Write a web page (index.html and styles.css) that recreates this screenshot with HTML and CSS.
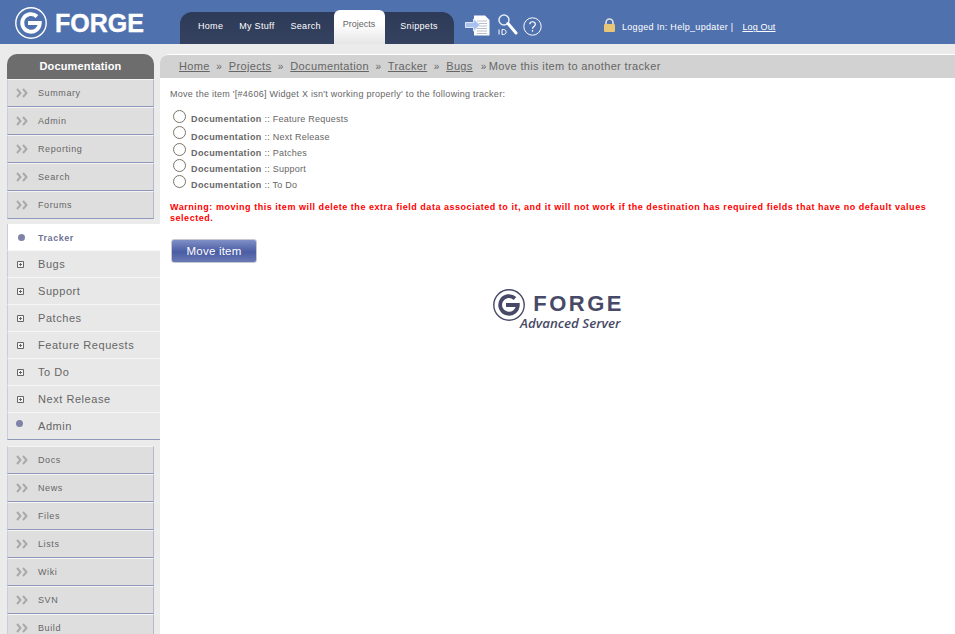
FILE: index.html
```html
<!DOCTYPE html>
<html lang="en">

<head>
    <meta charset="UTF-8">
    <title>Move this item to another tracker</title>
    <link rel="stylesheet" href="styles.css">
</head>

<body>
    <svg class="defs" width="0" height="0">
        <symbol id="chev" viewBox="0 0 12 10">
            <path d="M1 1l3.5 4L1 9M7 1l3.5 4L7 9" fill="none" stroke="#a9a9a9" stroke-width="2" />
        </symbol>
        <symbol id="plus" viewBox="0 0 7 7">
            <path d="M.5.5h6v6h-6z" fill="#f4f4f4" stroke="#666" />
            <path d="M2 3.5h3M3.5 2v3" stroke="#666" />
        </symbol>
        <symbol id="gmark" viewBox="0 0 32 32">
            <circle cx="16" cy="16" r="15.200" fill="none" stroke="currentColor" stroke-width="1.400" />
            <path d="M22 9.500A8.800 8.800 0 1 0 24.800 16H13" fill="none" stroke="currentColor" stroke-width="3.800" />
        </symbol>
    </svg>

    <div class="header">
        <div class="logo">
            <svg class="logo-mark"><use href="#gmark" /></svg>
            <span class="logo-text">FORGE</span>
        </div>
        <ul class="tabs">
            <li><a>Home</a></li>
            <li><a>My Stuff</a></li>
            <li><a>Search</a></li>
            <li class="on"><a>Projects</a></li>
            <li><a>Snippets</a></li>
        </ul>
        <div class="tools">
            <svg width="25" height="21" viewBox="0 0 25 21">
                <path d="M9 .5h11l4.500 4.500v15.500H9z" fill="#fff" />
                <path d="M12 6h10M12 8.500h10M12 11h10M12 13.500h10M12 16h10M12 18.500h10" stroke="#b9bfcc" />
                <path d="M.5 7.500h8V4l6.500 6-6.500 6v-3.500h-8z" fill="#a9c1ee" stroke="#dfe8f8" />
            </svg>
            <svg width="21" height="22" viewBox="0 0 21 22">
                <circle cx="6" cy="6" r="5" fill="none" stroke="#e4ebf7" stroke-width="1.500" />
                <path d="M10 9.500l8 9.500" stroke="#fff" stroke-width="3" stroke-linecap="round" />
                <path d="M1 15.500v5M4 15.500v5h1.500c3.500 0 3.500-5 0-5z" fill="none" stroke="#fff" />
            </svg>
            <svg width="19" height="19" viewBox="0 0 19 19">
                <circle cx="9.500" cy="9.500" r="8.700" fill="none" stroke="#fff" />
                <path d="M6.800 7.300c0-3.400 5.500-3.400 5.500 0 0 2.300-2.800 2.200-2.800 4.500" fill="none" stroke="#fff" stroke-width="1.200" />
                <path d="M9.500 13v1.600" stroke="#fff" stroke-width="1.300" />
            </svg>
        </div>
        <div class="user">
            <svg width="13" height="14" viewBox="0 0 13 14">
                <path d="M3 7V4.500a3.500 3.500 0 0 1 7 0V7" fill="none" stroke="#e3e3e3" stroke-width="1.600" />
                <rect x="1" y="6" width="11" height="8" rx="1" fill="#e9c577" />
            </svg>
            <span>Logged In: Help_updater |</span>
            <a>Log Out</a>
        </div>
    </div>

    <div class="page">
        <div class="side">
            <div class="side-title">Documentation</div>
            <ul class="menu">
                <li><svg class="chev"><use href="#chev" /></svg>Summary</li>
                <li><svg class="chev"><use href="#chev" /></svg>Admin</li>
                <li><svg class="chev"><use href="#chev" /></svg>Reporting</li>
                <li><svg class="chev"><use href="#chev" /></svg>Search</li>
                <li><svg class="chev"><use href="#chev" /></svg>Forums</li>
            </ul>
            <ul class="submenu">
                <li class="current"><i class="dot"></i>Tracker</li>
                <li><svg class="plus"><use href="#plus" /></svg>Bugs</li>
                <li><svg class="plus"><use href="#plus" /></svg>Support</li>
                <li><svg class="plus"><use href="#plus" /></svg>Patches</li>
                <li><svg class="plus"><use href="#plus" /></svg>Feature Requests</li>
                <li><svg class="plus"><use href="#plus" /></svg>To Do</li>
                <li><svg class="plus"><use href="#plus" /></svg>Next Release</li>
                <li><i class="dot"></i>Admin</li>
            </ul>
            <ul class="menu">
                <li><svg class="chev"><use href="#chev" /></svg>Docs</li>
                <li><svg class="chev"><use href="#chev" /></svg>News</li>
                <li><svg class="chev"><use href="#chev" /></svg>Files</li>
                <li><svg class="chev"><use href="#chev" /></svg>Lists</li>
                <li><svg class="chev"><use href="#chev" /></svg>Wiki</li>
                <li><svg class="chev"><use href="#chev" /></svg>SVN</li>
                <li><svg class="chev"><use href="#chev" /></svg>Build</li>
            </ul>
        </div>

        <div class="main">
            <div class="crumbs">
                <a>Home</a><b>»</b><a>Projects</a><b>»</b><a>Documentation</a><b>»</b><a>Tracker</a><b>»</b><a>Bugs</a><b class="last">»</b>Move this item to another tracker
            </div>
            <div class="content">
                <p class="intro">Move the item '[#4606] Widget X isn't working properly' to the following tracker:</p>
                <ul class="choices">
                    <li><input type="radio" name="tracker"><span><strong>Documentation</strong> :: Feature Requests</span></li>
                    <li><input type="radio" name="tracker"><span><strong>Documentation</strong> :: Next Release</span></li>
                    <li><input type="radio" name="tracker"><span><strong>Documentation</strong> :: Patches</span></li>
                    <li><input type="radio" name="tracker"><span><strong>Documentation</strong> :: Support</span></li>
                    <li><input type="radio" name="tracker"><span><strong>Documentation</strong> :: To Do</span></li>
                </ul>
                <p class="warning">Warning: moving this item will delete the extra field data associated to it, and it will not work if the destination has required fields that have no default values selected.</p>
                <button class="btn">Move item</button>
                <div class="foot-logo">
                    <div class="foot-row">
                        <svg class="foot-mark"><use href="#gmark" /></svg>
                        <span class="foot-name">FORGE</span>
                    </div>
                    <div class="foot-sub">Advanced Server</div>
                </div>
            </div>
        </div>
    </div>
</body>

</html>
```

FILE: styles.css
```css
* {
    margin: 0;
    padding: 0;
    box-sizing: border-box;
}

html,
body {
    height: 100%;
    overflow: hidden;
}

body {
    background-color: #ebebeb;
    font-family: "Liberation Sans", Arial, sans-serif;
    font-size: 10px;
    color: #666;
}

ul {
    list-style: none;
}

.defs {
    position: absolute;
}

/* header */
.header {
    height: 44px;
    background-color: #4f71ae;
    display: flex;
    align-items: flex-end;
}

.logo {
    width: 180px;
    height: 44px;
    padding: 7px 0 0 15px;
    display: flex;
    color: #fff;
}

.logo-mark {
    width: 32px;
    height: 32px;
}

.logo-text {
    margin-left: 8px;
    font-size: 25px;
    line-height: 32px;
    font-weight: bold;
    -webkit-text-stroke: .4px #fff;
}

.tabs {
    width: 274px;
    height: 32px;
    padding-left: 10px;
    display: flex;
    background: linear-gradient(#2d3a58, #35425f);
    border-radius: 12px 12px 0 0;
}

.tabs li {
    height: 32px;
}

.tabs a {
    display: block;
    padding: 0 8px;
    font-size: 9px;
    line-height: 28px;
    letter-spacing: .3px;
    color: #fff;
}

.tabs .on {
    height: 34px;
    margin: -2px 7px 0 5px;
    background: linear-gradient(#fff 40%, #e6e6e6);
    border-radius: 6px 6px 0 0;
}

.tabs .on a {
    padding: 0 10px 0 9px;
    line-height: 29px;
    letter-spacing: 0;
    color: #666;
}

.tools {
    width: 149px;
    height: 44px;
    padding: 14px 0 0 11px;
    display: flex;
    align-items: flex-start;
    gap: 8px;
}

.tools svg:first-child {
    margin-top: 1px;
}

.tools svg:last-child {
    margin: 3px 0 0 -4px;
}

.user {
    height: 44px;
    padding-top: 18px;
    display: flex;
    align-items: flex-start;
    color: #fff;
    font-size: 9px;
    letter-spacing: .3px;
}

.user span {
    margin: 4px 0 0 6px;
}

.user a {
    margin: 4px 0 0 9px;
    text-decoration: underline;
    letter-spacing: .15px;
}

/* sidebar */
.page {
    display: flex;
    padding-top: 10px;
}

.side {
    width: 160px;
    flex-shrink: 0;
}

.side-title {
    width: 147px;
    height: 25px;
    margin-left: 7px;
    background-color: #6d6d6d;
    border-radius: 10px 10px 0 0;
    text-align: center;
    line-height: 24px;
    font-size: 11px;
    font-weight: bold;
    letter-spacing: .15px;
    color: #fff;
}

.menu {
    width: 147px;
    margin-left: 7px;
}

.menu li {
    height: 28px;
    padding-left: 8px;
    display: flex;
    align-items: center;
    background-color: #dedede;
    border: 1px solid #c9cde0;
    border-top-color: #f4f4f4;
    border-right-color: #b5b8cc;
    border-bottom-color: #8f98bb;
    font-size: 9px;
    letter-spacing: .6px;
}

.chev {
    width: 12px;
    height: 10px;
    margin-right: 10px;
}

.submenu {
    margin: 5px 0 6px 7px;
}

.submenu li {
    height: 27px;
    padding-left: 9px;
    display: flex;
    align-items: center;
    background-color: #e8e8e8;
    border-left: 1px solid #c9cde0;
    border-bottom: 1px solid #f6f6f6;
    font-size: 11px;
    letter-spacing: .55px;
}

.submenu li:last-child {
    border-bottom-color: #8f98bb;
}

.submenu .current {
    padding-top: 2px;
    background-color: #fff;
    font-size: 9px;
    font-weight: bold;
    color: #6f7396;
}

.plus {
    width: 7px;
    height: 7px;
    margin-right: 14px;
}

.dot {
    width: 7px;
    height: 7px;
    margin: -5px 15px 0 -1px;
    background-color: #7f83a8;
    border-radius: 50%;
}

.current .dot {
    margin: -2px 13px 0 1px;
}

/* main */
.main {
    flex: 1;
    min-height: 600px;
    padding-top: 1px;
    background-color: #fff;
    border-radius: 9px 0 0 0;
}

.crumbs {
    height: 23px;
    padding-left: 19px;
    background-color: #d2d2d2;
    border-radius: 8px 0 0 0;
    line-height: 23px;
    font-size: 11px;
    letter-spacing: .36px;
}

.crumbs a {
    text-decoration: underline;
}

.crumbs b {
    margin: 0 6.500px;
    font-weight: normal;
    font-size: 10px;
}

.crumbs .last {
    margin: 0 2px 0 8px;
}

.content {
    padding: 10px 10px 0;
}

.intro {
    font-size: 9px;
    line-height: 12px;
    letter-spacing: .27px;
}

.choices {
    margin-top: 9px;
    font-size: 9px;
    letter-spacing: .25px;
}

.choices strong {
    letter-spacing: .4px;
}

.choices li {
    height: 16px;
    display: flex;
    align-items: flex-start;
}

.choices li:nth-child(2) {
    height: 17px;
}

.choices input {
    width: 13px;
    height: 13px;
    margin: 1px 5px 0 3px;
    appearance: none;
    background-color: #fff;
    border: 1px solid #7b7468;
    border-radius: 50%;
}

.choices span {
    margin-top: 5px;
    line-height: 12px;
}

.choices li:first-child span {
    margin-top: 4px;
}

.choices li:nth-child(2) span {
    margin-top: 6px;
}

.warning {
    margin-top: 12px;
    font-size: 9px;
    line-height: 11px;
    font-weight: bold;
    letter-spacing: .53px;
    color: #f00;
}

.btn {
    display: block;
    width: 86px;
    height: 24px;
    margin: 15px 0 0 1px;
    background: linear-gradient(#7f8fc6, #4a5ca3 55%, #6a79b6);
    border: 1px solid #c6c8d0;
    border-radius: 3px;
    font-family: "Liberation Sans", Arial, sans-serif;
    font-size: 11.500px;
    letter-spacing: .2px;
    color: #fff;
}

.foot-logo {
    width: 130px;
    margin: 26px auto 0;
    color: #474a66;
}

.foot-row {
    display: flex;
    justify-content: space-between;
}

.foot-mark {
    width: 32px;
    height: 32px;
}

.foot-name {
    margin: 4px -1.500px 0 0;
    font-size: 22px;
    line-height: 22px;
    font-weight: bold;
    letter-spacing: 2.500px;
}

.foot-sub {
    margin: -5px 2px 0 0;
    text-align: right;
    font-family: "Open Sans", sans-serif;
    font-size: 13.300px;
    line-height: 14px;
    font-style: italic;
    font-weight: 600;
}
```
